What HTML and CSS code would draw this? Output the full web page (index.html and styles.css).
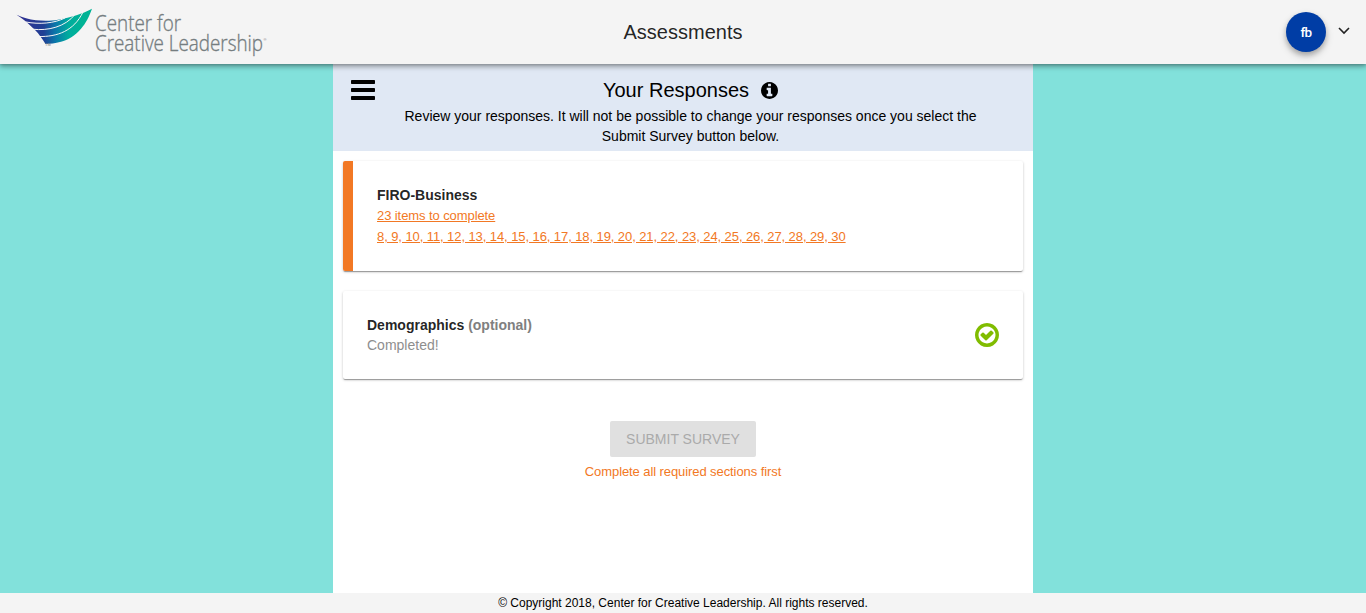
FILE: index.html
```html
<!DOCTYPE html>
<html lang="en">
<head>
<meta charset="utf-8">
<title>Assessments</title>
<link rel="stylesheet" href="styles.css">
</head>
<body>
<header class="topbar">
  <div class="topbar-side">
    <svg class="logo" width="264" height="64" viewBox="0 -4 264 64" role="img" aria-label="Center for Creative Leadership">
      <defs>
        <linearGradient id="wing" x1="14" y1="14" x2="74" y2="14" gradientUnits="userSpaceOnUse">
          <stop offset="0" stop-color="#2e3192"/>
          <stop offset=".36" stop-color="#203f94"/>
          <stop offset=".56" stop-color="#0a78aa"/>
          <stop offset=".78" stop-color="#00ad9d"/>
          <stop offset="1" stop-color="#00b395"/>
        </linearGradient>
      </defs>
      <path fill="url(#wing)" d="M8.500 10.700C15 13.500 21 15.500 28 16.200C36 17 44 16.800 50 15.700C63 13.500 75 9.500 84 4.700C81 13 78 19 73 24.700C67 31.500 60 36 53 37.800C47 39.500 42 40 37.500 40C34 34.500 31 30 27 26C21 20 15 14.500 8.500 10.700Z"/>
      <g fill="none" stroke="#f4f4f4" stroke-width="1">
        <path d="M18 18C31 20.500 46 19.500 57 14"/>
        <path d="M24.500 25.200C40 27 57 23 67 10.500"/>
        <path d="M30.500 32.500C49 33 66 27 75 8"/>
      </g>
      <text class="logo-mark" x="37" y="42">TM</text>
      <text class="logo-text" x="87" y="27" textLength="86" lengthAdjust="spacingAndGlyphs">Center for</text>
      <text class="logo-text" x="87" y="46.500" textLength="168" lengthAdjust="spacingAndGlyphs">Creative Leadership</text>
      <text class="logo-mark" x="255.500" y="37">®</text>
    </svg>
  </div>
  <h1 class="topbar-title">Assessments</h1>
  <div class="topbar-side account">
    <span class="avatar">fb</span>
    <svg class="chevron" width="12" height="8" viewBox="0 0 12 8"><path d="M1 1l5 5 5-5"/></svg>
  </div>
</header>
<main class="panel">
  <section class="intro">
    <button class="menu" aria-label="Menu">
      <svg width="24" height="20" viewBox="0 0 24 20"><rect width="24" height="4" rx=".7"/><rect y="8" width="24" height="4" rx=".7"/><rect y="16" width="24" height="4" rx=".7"/></svg>
    </button>
    <div class="intro-body">
      <h2 class="intro-title"><span class="intro-label">Your Responses</span>
        <svg class="info" viewBox="128 128 1536 1536"><path d="M1152 1376v-160q0-14-9-23t-23-9h-96v-512q0-14-9-23t-23-9h-320q-14 0-23 9t-9 23v160q0 14 9 23t23 9h96v320h-96q-14 0-23 9t-9 23v160q0 14 9 23t23 9h448q14 0 23-9t9-23zm-128-896v-160q0-14-9-23t-23-9h-192q-14 0-23 9t-9 23v160q0 14 9 23t23 9h192q14 0 23-9t9-23zm640 416q0 209-103 385.500t-279.500 279.500-385.500 103-385.500-103-279.500-279.500-103-385.500 103-385.500 279.500-279.500 385.500-103 385.500 103 279.500 279.500 103 385.500z"/></svg>
      </h2>
      <p class="intro-text">Review your responses. It will not be possible to change your responses once you select the<br>Submit Survey button below.</p>
    </div>
  </section>
  <section class="card card-incomplete">
    <div>
      <h3 class="card-title">FIRO-Business</h3>
      <a class="link">23 items to complete</a>
      <a class="link">8, 9, 10, 11, 12, 13, 14, 15, 16, 17, 18, 19, 20, 21, 22, 23, 24, 25, 26, 27, 28, 29, 30</a>
    </div>
  </section>
  <section class="card card-complete">
    <div>
      <h3 class="card-title">Demographics <span class="muted">(optional)</span></h3>
      <p class="status">Completed!</p>
    </div>
    <svg class="check" viewBox="128 128 1536 1536"><path d="M1299 813l-422 422q-19 19-45 19t-45-19l-294-294q-19-19-19-45t19-45l102-102q19-19 45-19t45 19l147 147 275-275q19-19 45-19t45 19l102 102q19 19 19 45t-19 45zm141 83q0-148-73-273t-198-198-273-73-273 73-198 198-73 273 73 273 198 198 273 73 273-73 198-198 73-273zm224 0q0 209-103 385.500t-279.500 279.500-385.500 103-385.500-103-279.500-279.500-103-385.500 103-385.500 279.500-279.500 385.500-103 385.500 103 279.500 279.500 103 385.500z"/></svg>
  </section>
  <div class="submit">
    <button class="submit-button" disabled>SUBMIT SURVEY</button>
    <p class="submit-note">Complete all required sections first</p>
  </div>
</main>
<footer class="footer"><span class="copyright">© Copyright 2018, Center for Creative Leadership. All rights reserved.</span></footer>
</body>
</html>
```
FILE: styles.css
```css
* { box-sizing: border-box; }
body {
  margin: 0;
  height: 613px;
  display: flex;
  flex-direction: column;
  background: #82e1db;
  color: #000;
  font-family: "Liberation Sans", Arial, sans-serif;
  font-size: 14px;
  line-height: 20px;
  overflow: hidden;
}
h1, h2, h3, p { margin: 0; font-weight: 400; }
button { border: 0; padding: 0; font-family: inherit; }
svg { display: block; flex: none; }

.topbar {
  height: 64px;
  flex: none;
  display: flex;
  align-items: center;
  padding: 0 16px 0 8px;
  background: #f4f4f4;
  box-shadow: 0 1px 8px rgba(0,0,0,.2), 0 3px 4px rgba(0,0,0,.2), 0 1px 2px rgba(0,0,0,.14);
  z-index: 1;
}
.topbar-side { flex: 1; }
.logo { overflow: visible; }
.logo-text { font-family: "Open Sans", sans-serif; font-weight: 300; font-size: 21.5px; fill: #757d80; stroke: #757d80; stroke-width: .35px; }
.logo-mark { font-size: 4px; fill: #777; }
.topbar-title { font-size: 20px; color: rgba(0,0,0,.87); padding-left: 8px; }
.account { display: flex; justify-content: flex-end; align-items: center; gap: 12px; }
.avatar {
  width: 40px;
  height: 40px;
  border-radius: 50%;
  background: #003da5;
  color: #fff;
  font-family: Roboto, sans-serif;
  font-size: 13.5px;
  font-weight: 500;
  letter-spacing: -.6px;
  line-height: 40px;
  text-align: center;
  box-shadow: 0 3px 5px rgba(0,0,0,.22), 0 4px 8px rgba(0,0,0,.16);
}
.chevron { fill: none; stroke: #222; stroke-width: 1.6; margin-top: -3px; }

.panel { flex: 1; width: 700px; margin: 0 auto; background: #fff; }
.intro { height: 87px; display: flex; background: #e0e8f4; padding: 12px 18px 0; }
.menu { width: 24px; height: 20px; margin-top: 4px; background: none; }
.intro-body { flex: 1; padding-right: 9px; text-align: center; }
.intro-title { display: flex; justify-content: center; align-items: center; gap: 12px; height: 28px; font-size: 20px; }
.info { width: 17px; height: 17px; }
.intro-text { padding-top: 2px; }

.card {
  display: flex;
  align-items: center;
  justify-content: space-between;
  margin: 10px 10px 0;
  padding: 0 24px;
  border-radius: 2px;
  box-shadow: 0 1px 3px rgba(0,0,0,.2), 0 1px 1px rgba(0,0,0,.14), 0 2px 1px -1px rgba(0,0,0,.2);
}
.card-incomplete { height: 110px; border-left: 10px solid #f27824; }
.card-complete { height: 88px; margin-top: 20px; }
.card-title { font-size: 14px; font-weight: 700; color: rgba(0,0,0,.87); }
.muted { color: #808080; }
.link { display: block; width: max-content; color: #f27824; font-size: 13px; line-height: 21px; letter-spacing: -.085px; text-decoration: underline; }
.status { color: #8e8e8e; }
.check { width: 24px; height: 24px; fill: #80bc00; }

.submit { display: flex; flex-direction: column; align-items: center; padding-top: 42px; }
.submit-button { width: 146px; height: 36px; border-radius: 2px; background: #e0e0e0; color: #aaa; font-size: 14px; }
.submit-note { padding-top: 5px; font-size: 13px; letter-spacing: -.085px; color: #f27824; }
.footer { height: 20px; flex: none; background: #f4f4f4; text-align: center; font-size: 12px; }
```
